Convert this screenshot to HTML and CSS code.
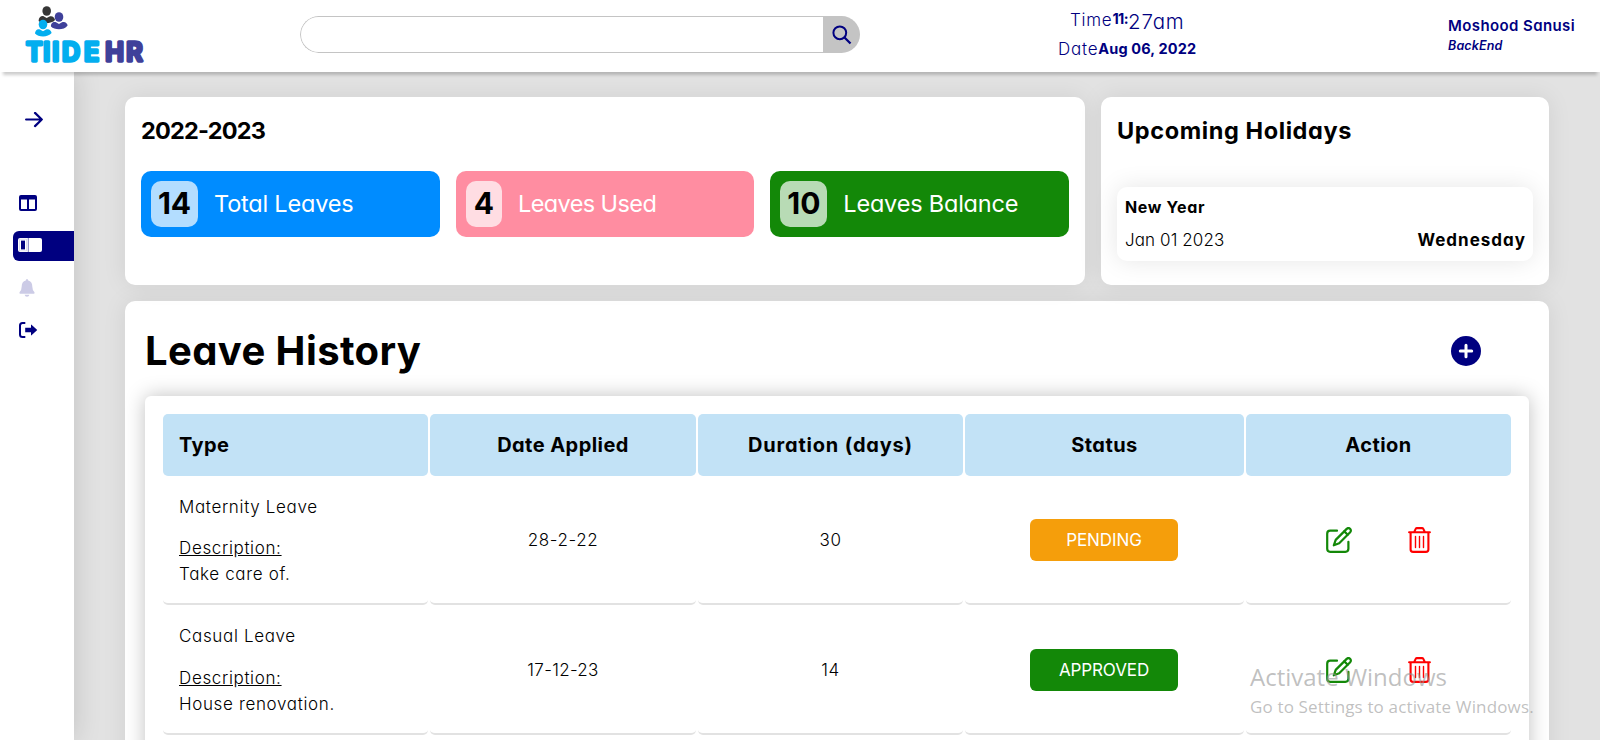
FILE: index.html
```html
<!DOCTYPE html>
<html lang="en">
<head>
<meta charset="utf-8">
<title>Tiide HR - Leave</title>
<link rel="stylesheet" href="styles.css">
</head>
<body>
<svg class="defs" width="0" height="0" aria-hidden="true">
  <symbol id="edit" viewBox="0 0 26 26">
    <g fill="none" stroke="currentColor" stroke-width="2.200" stroke-linecap="round" stroke-linejoin="round">
      <path d="M11 3.700H4.200A3 3 0 0 0 1.200 6.700V21.800A3 3 0 0 0 4.200 24.800H19.400A3 3 0 0 0 22.400 21.800V14.800"/>
      <path d="M7.800 18.300L9.700 12.900L20.700 1.900A2.100 2.100 0 0 1 24.200 5.300L13.200 16.200Z"/>
      <path d="M18.300 4.400L21.700 7.800"/>
    </g>
  </symbol>
  <symbol id="trash" viewBox="0 0 23 26">
    <g fill="none" stroke="currentColor" stroke-width="2.100" stroke-linecap="round" stroke-linejoin="round">
      <path d="M1.100 5.300H21.900M2.600 5.300V22.500Q2.600 24.900 5.100 24.900H17.900Q20.400 24.900 20.400 22.500V5.300M6.200 5L7.700 1.900Q8.100 1.100 9 1.100H14Q14.900 1.100 15.300 1.900L16.800 5"/>
      <path stroke-width="1.400" d="M7.500 9.500V20.500M11.500 9.500V20.500M15.500 9.500V20.500"/>
    </g>
  </symbol>
</svg>

<header class="topbar">
  <svg class="logo" width="122" height="66" viewBox="0 0 122 66" role="img" aria-label="Tiide HR">
    <g fill="#363636"><ellipse cx="22.700" cy="5" rx="4.300" ry="4.800"/><path d="M14.600 15C14.600 11 18 9.300 20 10.500L22.700 12L25.500 10.500C28 9.300 31 11.500 31 14C28 18 17.500 18 14.600 15Z"/></g>
    <g fill="#3f409a"><ellipse cx="35" cy="11" rx="4.300" ry="4.800"/><path d="M27 20.500C26.500 17.500 29.500 15 32 16.300L35 18L38 16.300C41 15 43.500 17.500 43.600 19.500C40 24.600 30.500 24.200 27 20.500Z"/></g>
    <g fill="#03aeef"><ellipse cx="19" cy="18.500" rx="4.300" ry="4.800"/><path d="M11 27.500C11 24.500 13.500 22.300 16 23.500L19 25.200L22 23.500C25 22.300 27.400 25 27.600 27C24 31.600 14.500 31.500 11 27.500Z"/></g>
    <text class="logo-word logo-cyan" x="2 19.200 28.200 38 60" y="54.900">TIIDE</text>
    <text class="logo-word logo-indigo" x="81.300 102.300" y="54.900">HR</text>
  </svg>
  <div class="search">
    <input class="search-input" type="text" aria-label="Search">
    <button class="search-btn" aria-label="Search">
      <svg width="20" height="20" viewBox="0 0 20 20" fill="none" stroke="#000080" stroke-width="2"><circle cx="7.800" cy="7.800" r="6.400"/><path d="M12.500 12.500L18.500 18.500" stroke-width="2.300"/></svg>
    </button>
  </div>
  <div class="clock">
    <div class="time"><span class="clock-label">Time</span><b class="hour">11:</b><span class="minute">27am</span></div>
    <div class="date"><span class="clock-label">Date</span><b class="day">Aug 06, 2022</b></div>
  </div>
  <div class="user">
    <div class="user-name">Moshood Sanusi</div>
    <div class="user-role">BackEnd</div>
  </div>
</header>

<div class="shell">
  <nav class="sidebar">
    <a class="nav-toggle"><svg width="18" height="16" viewBox="0 0 18 16" fill="none" stroke="#000080" stroke-width="2.200" stroke-linecap="round" stroke-linejoin="round"><path d="M1.100 7.500H16.800M10 .9L16.800 7.500L10 14.100"/></svg></a>
    <a class="nav-item nav-board"><svg width="18" height="16" viewBox="0 0 18 16"><path fill="#000080" fill-rule="evenodd" d="M2 0H16A2 2 0 0 1 18 2V14A2 2 0 0 1 16 16H2A2 2 0 0 1 0 14V2A2 2 0 0 1 2 0ZM2 4.500V14H8V4.500ZM10 4.500V14H16V4.500Z"/></svg></a>
    <a class="nav-item nav-active"><svg width="24" height="14" viewBox="0 0 24 14"><rect width="24" height="14" rx="2" fill="#fff"/><rect x="3" y="2.600" width="4" height="8.800" fill="#000080"/><path d="M10.300 0V14" stroke="#7f7fbf" stroke-width="1"/><path d="M1.500 1.200H8.500V12.800H1.500Z" fill="none" stroke="#bdbddd" stroke-width=".5"/></svg></a>
    <a class="nav-item"><svg width="16" height="18" viewBox="0 0 16 18" fill="#cccbe6"><path d="M8 0Q9.200 0 9.200 1.500Q13.300 2.600 13.300 7.500Q13.300 11.300 15.500 13.300Q15.800 14.800 14.800 14.800H1.200Q.2 14.800 .5 13.300Q2.700 11.300 2.700 7.500Q2.700 2.600 6.800 1.500Q6.800 0 8 0ZM5.600 15.800H10.400Q10 17.800 8 17.800T5.600 15.800Z"/></svg></a>
    <a class="nav-item"><svg width="19" height="16" viewBox="0 0 19 16"><path d="M6.300 1H3.500Q1 1 1 3.500V12.500Q1 15 3.500 15H6.300" fill="none" stroke="#000080" stroke-width="2"/><path d="M6.200 5.800H12V2.900Q12 2.300 12.500 2.700L18 7.700Q18.300 8 18 8.300L12.500 13.300Q12 13.700 12 13.100V10.200H6.200Z" fill="#000080"/></svg></a>
  </nav>

  <main class="content">
    <section class="summary">
      <div class="card year-card">
        <h2 class="card-title year-title">2022-2023</h2>
        <div class="stats">
          <div class="stat stat-blue"><span class="stat-num">14</span><span class="stat-label">Total Leaves</span></div>
          <div class="stat stat-pink"><span class="stat-num">4</span><span class="stat-label">Leaves Used</span></div>
          <div class="stat stat-green"><span class="stat-num">10</span><span class="stat-label">Leaves Balance</span></div>
        </div>
      </div>
      <div class="card holiday-card">
        <h2 class="card-title">Upcoming Holidays</h2>
        <div class="holiday">
          <div class="holiday-name">New Year</div>
          <div class="holiday-row"><span class="holiday-date">Jan 01 2023</span><span class="holiday-day">Wednesday</span></div>
        </div>
      </div>
    </section>

    <section class="card history">
      <div class="history-head">
        <h1 class="history-title">Leave History</h1>
        <svg class="add" width="30" height="30" viewBox="0 0 30 30"><circle cx="15" cy="15" r="15" fill="#000080"/><path d="M15 9.300V20.700M9.300 15H20.700" stroke="#fff" stroke-width="3" stroke-linecap="round"/></svg>
      </div>
      <div class="panel">
        <div class="grid">
          <div class="th th-left">Type</div><div class="th">Date Applied</div><div class="th th-duration">Duration (days)</div><div class="th">Status</div><div class="th">Action</div>

          <div class="td td-type"><p class="kind">Maternity Leave</p><p class="desc-label">Description:</p><p class="desc">Take care of.</p></div>
          <div class="td">28-2-22</div>
          <div class="td">30</div>
          <div class="td"><span class="pill pill-pending">PENDING</span></div>
          <div class="td td-action"><svg class="edit" width="26" height="26"><use href="#edit"/></svg><svg class="trash" width="23" height="26"><use href="#trash"/></svg></div>

          <div class="td td-type"><p class="kind">Casual Leave</p><p class="desc-label desc-label-tall">Description:</p><p class="desc">House renovation.</p></div>
          <div class="td td-tight">17-12-23</div>
          <div class="td">14</div>
          <div class="td"><span class="pill pill-approved">APPROVED</span></div>
          <div class="td td-action"><svg class="edit" width="26" height="26"><use href="#edit"/></svg><svg class="trash" width="23" height="26"><use href="#trash"/></svg></div>
        </div>
      </div>
    </section>
  </main>
</div>

<div class="watermark">
  <div class="watermark-title">Activate Windows</div>
  <div class="watermark-text">Go to Settings to activate Windows.</div>
</div>
</body>
</html>
```

FILE: styles.css
```css
* { box-sizing: border-box; margin: 0; padding: 0; }

body {
  height: 740px;
  overflow: hidden;
  background: #e2e2e2;
  color: #000;
  font-family: Inter, "Open Sans", sans-serif;
  font-feature-settings: "cv11";
}

.defs { display: block; }

/* Top bar */
.topbar {
  position: relative;
  z-index: 2;
  display: flex;
  align-items: flex-start;
  height: 72px;
  padding: 6px 25px 0 24px;
  background: #fff;
  color: #000080;
  box-shadow: 0 6px 3px -3px rgba(0, 0, 0, .2);
}
.logo { flex: none; }
.logo-word {
  font-weight: 600;
  font-size: 25px;
  stroke-width: 3.3px;
  stroke-linejoin: round;
}
.logo-cyan { fill: #03aeef; stroke: #03aeef; }
.logo-indigo { fill: #3f409a; stroke: #3f409a; }

.search {
  display: flex;
  width: 560px;
  height: 37px;
  margin: 10px 0 0 154px;
  border-radius: 19px;
  overflow: hidden;
}
.search-input {
  width: 523px;
  border: 1px solid #c4c4c4;
  border-right: 0;
  border-radius: 19px 0 0 19px;
  background: #fff;
  outline: 0;
}
.search-btn {
  display: flex;
  align-items: center;
  justify-content: center;
  width: 37px;
  border: 0;
  background: #c4c4c4;
}

.clock { width: 142px; margin-left: 198px; white-space: nowrap; }
.time, .date { display: flex; align-items: flex-start; }
.time { height: 29px; padding-left: 12px; }
.clock-label { font-size: 17px; line-height: 28px; font-weight: 300; letter-spacing: .75px; }
.hour { font-size: 14.5px; line-height: 25px; font-weight: 700; letter-spacing: -.6px; }
.minute { font-size: 20.5px; line-height: 31px; font-weight: 300; letter-spacing: .8px; }
.day { font-size: 14.5px; line-height: 27px; font-weight: 700; letter-spacing: .15px; }

.user { margin: 9px 0 0 auto; width: 127px; white-space: nowrap; }
.user-name { font-size: 15px; line-height: 21px; font-weight: 600; letter-spacing: .4px; }
.user-role { font-size: 12.5px; line-height: 20px; font-weight: 600; font-style: italic; letter-spacing: .15px; }

/* Shell */
.shell { display: flex; height: 668px; }
.sidebar {
  flex: none;
  display: flex;
  flex-direction: column;
  width: 74px;
  padding-left: 13px;
  background: #fff;
  box-shadow: 0 0 28px rgba(0, 0, 0, .15);
}
.nav-toggle { display: flex; padding: 40px 0 0 12px; height: 117px; }
.nav-item {
  display: flex;
  align-items: center;
  height: 30px;
  margin-bottom: 12px;
  padding-left: 6px;
}
.nav-board { padding-bottom: 2px; }
.nav-active {
  align-items: flex-start;
  padding: 7px 0 0 5px;
  border-radius: 6px 0 0 6px;
  background: #000080;
}

.content { flex: 1; padding: 25px 51px 0; }
.card {
  border-radius: 10px;
  background: #fff;
  box-shadow: 0 0 25px rgba(0, 0, 0, .08);
}
.summary { display: flex; gap: 16px; height: 188px; margin-bottom: 16px; }
.year-card { width: 960px; padding: 16px; }
.holiday-card { flex: 1; padding: 16px; }
.card-title { font-size: 23.5px; line-height: 36px; font-weight: 700; letter-spacing: .6px; }
.year-title { letter-spacing: -.8px; }

.stats { display: grid; grid-template-columns: repeat(3, 1fr); gap: 16px; margin-top: 22px; }
.stat {
  display: flex;
  align-items: center;
  height: 66px;
  padding: 10px;
  border-radius: 10px;
}
.stat-blue { background: #008cff; }
.stat-pink { background: #ff8da1; }
.stat-green { background: #138808; }
.stat-num {
  min-width: 36px;
  height: 46px;
  padding: 0 8px;
  border-radius: 10px;
  background: rgba(255, 255, 255, .7);
  font-size: 30px;
  line-height: 44px;
  font-weight: 700;
  text-align: center;
}
.stat-blue .stat-num, .stat-green .stat-num { width: 47px; padding: 0; }
.stat-label {
  margin-left: 16px;
  padding-bottom: 1px;
  color: #fff;
  font-size: 23.5px;
  letter-spacing: -.2px;
  white-space: nowrap;
}
.stat-pink .stat-label { letter-spacing: -.6px; }

.holiday {
  height: 74px;
  margin-top: 38px;
  padding: 8px;
  border-radius: 10px;
  box-shadow: 0 0 25px rgba(0, 0, 0, .1);
}
.holiday-name { font-size: 16px; line-height: 24px; font-weight: 700; letter-spacing: .65px; }
.holiday-row { display: flex; justify-content: space-between; margin-top: 8px; font-size: 17px; line-height: 26px; }
.holiday-date { font-weight: 300; letter-spacing: .1px; }
.holiday-day { font-weight: 700; letter-spacing: 1px; margin-right: -1px; }

/* Leave history */
.history { height: 500px; padding: 20px 20px 0; }
.history-head { display: flex; align-items: center; height: 60px; padding-right: 48px; margin-bottom: 15px; }
.history-title { font-size: 40px; line-height: 60px; font-weight: 700; letter-spacing: .4px; }
.add { margin-left: auto; }
.panel {
  height: 404px;
  padding: 18px;
  border-radius: 6px;
  box-shadow: 0 0 20px rgba(0, 0, 0, .25);
}
.grid {
  display: grid;
  grid-template-columns: 265px 266px 265px 279px 265px;
  grid-template-rows: 62px 127px 128px;
  gap: 2px;
}
.th {
  display: flex;
  align-items: center;
  justify-content: center;
  border-radius: 5px;
  background: #c2e2f6;
  font-size: 20px;
  font-weight: 700;
  letter-spacing: .45px;
}
.th-left { justify-content: flex-start; padding-left: 16px; }
.th-duration { letter-spacing: .8px; }
.td {
  display: flex;
  align-items: center;
  justify-content: center;
  padding-bottom: 1px;
  border-bottom: 2px solid #e2e2e2;
  border-radius: 5px;
  font-size: 17px;
  font-weight: 300;
  letter-spacing: .6px;
}
.td-tight { letter-spacing: .3px; }
.td-type {
  display: block;
  padding: 16px;
  line-height: 26px;
  letter-spacing: .65px;
}
.desc-label { margin-top: 15px; text-decoration: underline; }
.desc-label-tall { margin-top: 16px; }
.td-action { gap: 56px; }
.edit { color: #138808; }
.trash { color: #f00; }
.pill {
  width: 148px;
  height: 42px;
  margin-right: 1px;
  border-radius: 6px;
  color: #fff;
  font-weight: 400;
  line-height: 42px;
  letter-spacing: -.1px;
  text-align: center;
}
.pill-pending { background: #f59e0b; }
.pill-approved { background: #138808; }

/* System notice drawn over the page */
.watermark {
  position: absolute;
  z-index: 3;
  left: 1250px;
  top: 661px;
  color: rgba(150, 150, 150, .6);
  font-family: "Open Sans", "Noto Sans", sans-serif;
  white-space: nowrap;
}
.watermark-title { font-size: 24px; line-height: 32px; }
.watermark-text { font-size: 17px; line-height: 27px; letter-spacing: .15px; }
```
